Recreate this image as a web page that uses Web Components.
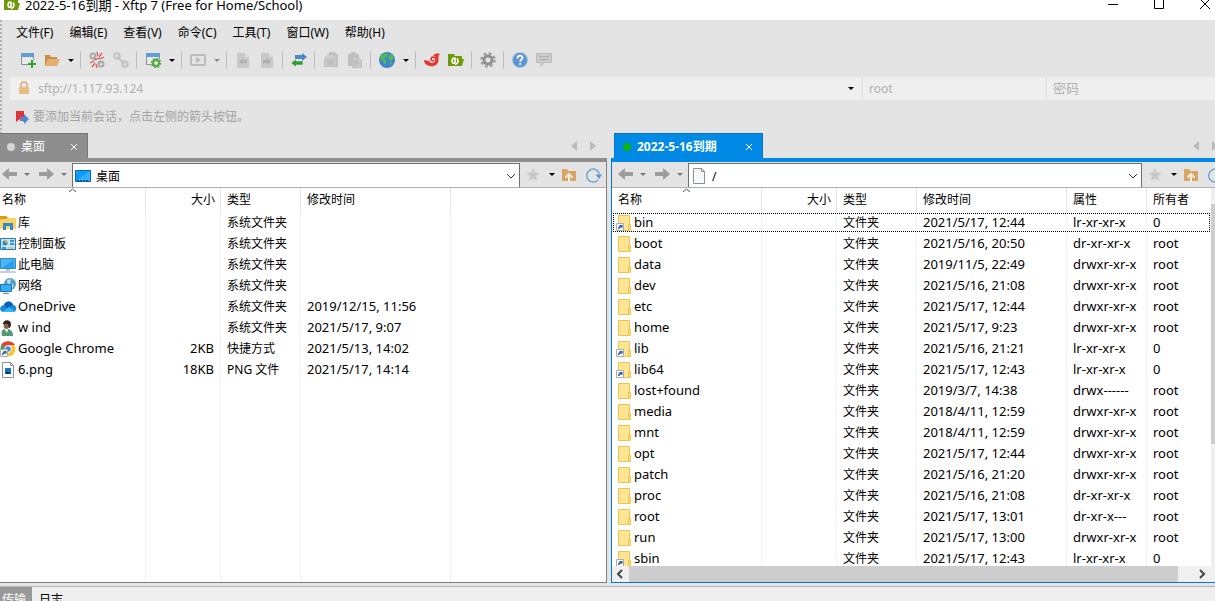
<!DOCTYPE html>
<html lang="zh-CN">
<head>
<meta charset="utf-8">
<title>2022-5-16到期 - Xftp 7 (Free for Home/School)</title>
<style>
html, body { margin: 0; height: 100%; overflow: hidden; }
body { font: 12px/16px "Noto Sans", "Noto Sans CJK SC", sans-serif; color: #000; background: #e4e4e4; }
</style>
</head>
<body>
<xftp-app></xftp-app>
<script>
const folder = '<path d="M2.5.5h11v15h-11z" fill="#ffe593" stroke="#eac54f"/><path d="M12.500 9.500h2v6h-2z" fill="#ffe07a" stroke="#eac54f"/>';
const shortcut = '<path d="M.5 8.500h7v7h-7z" fill="#fff" stroke="#a9adb3"/><path d="M2 14c0-2 1-3 2-3l-1-1h3.500v3.500l-1-1c-1 0-2 0-2 1.500z" fill="#2c5aa0"/>';
const docShape = '<path d="M2 1h8l4 4v11H2z" fill="#c9c9c9"/><path d="M10 1v4h4z" fill="#dedede"/>';
const ICONS = {
  appLogo: '<path d="M0 2h6l1 2h7v10H0z" fill="#6f9a0c"/><path d="M14 7h2l-2 7h-1z" fill="#6f9a0c"/><path d="M6 5.800C3.600 6.500 3.600 10 5 11.500M7 5.500v5.500M7 12.500C10.500 12 10.500 8 9 6.500M5 11.500l2-.5" fill="none" stroke="#fff" stroke-width="1.700"/>',
  newWin: '<path d="M1.500 2.500h12v10h-12z" fill="#eaeaea" stroke="#8d8d8d"/><path d="M1 1h13v4H1z" fill="#5b9fd6"/><path d="M8 12h8M12 8v8" stroke="#e4e4e4" stroke-width="4"/><path d="M8 12h8M12 8v8" stroke="#2aa42a" stroke-width="2"/>',
  open: '<path d="M1 3h5l1 2h6v9H1z" fill="#c98f45"/><path d="M4 7h12l-3 7H1z" fill="#e2b172"/>',
  unlink: '<g fill="none" stroke="#a9a9a9" stroke-width="2"><circle cx="4" cy="4" r="2.500"/><circle cx="12" cy="12" r="2.500"/><path d="M5 5l2 2M9.500 9.500l2 2"/></g><path d="M8 0l1 4M13 1l-3 4M15 5l-4 2M1 11l4-2M3 15l3-4M8 16l-1-4M5 8l6-2" stroke="#e45454" stroke-width="1.300"/>',
  link: '<g fill="none" stroke="#c3c3c3" stroke-width="2"><circle cx="4" cy="4" r="2.800"/><circle cx="12" cy="12" r="2.800"/><path d="M4 5l8 7"/></g>',
  winGear: '<path d="M1.500 2.500h13v10h-13z" fill="#eaeaea" stroke="#8d8d8d"/><path d="M1 1h14v4H1z" fill="#5b9fd6"/><circle cx="11" cy="11" r="5" fill="#e4e4e4"/><circle cx="11" cy="11" r="3" fill="none" stroke="#4fa83f" stroke-width="2"/><circle cx="11" cy="11" r="4.500" fill="none" stroke="#4fa83f" stroke-width="1.600" stroke-dasharray="1.800 1.700"/>',
  play: '<rect x="1" y="3" width="14" height="10" rx="1" fill="none" stroke="#bcbcbc" stroke-width="2"/><path d="M6 5l5 3-5 3z" fill="#bcbcbc"/>',
  docLeft: docShape + '<path d="M4 9.500l4-3.500v2h4v3H8v2z" fill="#b0b0b0"/>',
  docRight: docShape + '<path d="M12 9.500L8 6v2H4v3h4v2z" fill="#b0b0b0"/>',
  swap: '<path d="M4 3h7V1l5 4-5 4V7H4z" fill="#4b86c9"/><path d="M12 9H5V7l-5 4 5 4v-2h7z" fill="#2ea02e" stroke="#e4e4e4" stroke-width=".5"/>',
  copy: '<path d="M6 0h6l3 3v12H6z" fill="#c2c2c2"/><path d="M5 2.500h5l3 3v9H1.500v-8z" fill="#cdcdcd" stroke="#bdbdbd"/><path d="M4 8h7M4 10h7M4 12h7" stroke="#b2b2b2"/>',
  paste: '<path d="M1 2h3V0h5v2h3v12H1z" fill="#bfbfbf"/><path d="M5.500 5.500h6l3 3v7h-9z" fill="#cdcdcd" stroke="#bdbdbd"/><path d="M7 9h5M7 11h5M7 13h5" stroke="#b2b2b2"/>',
  globe: '<circle cx="8" cy="8" r="8" fill="#3f83cc"/><path d="M1 5l4-4 4 1-1 3-3 1 3 3-2 4-2-4-3-2zM10 3l3-1 2 4-3 3-3-3zM11 10l3 0-3 4z" fill="#4fb956"/>',
  shell: '<path d="M3 10c3 4 9 2 9-2 0-3-4-4-5-1.500C6.500 9 9 9.500 9.500 8" fill="none" stroke="#e8342e" stroke-width="1.700"/><path d="M0 8l5 1c2 3 5 3 7 0 1-2 0-5-3-5.500 2-2 4-2.500 7-1.500-2 1-1.500 3-1.500 6 0 5-5 7-9 6-4-1-5.500-4-5.500-6z" fill="#e8342e"/>',
  gear: '<circle cx="8" cy="8" r="4" fill="none" stroke="#909090" stroke-width="3"/><circle cx="8" cy="8" r="6.500" fill="none" stroke="#999" stroke-width="2.500" stroke-dasharray="2.600 2.500"/>',
  help: '<circle cx="8" cy="8" r="8" fill="#a8bfda"/><circle cx="8" cy="8" r="7" fill="#5e94cf"/><path d="M5.500 6.500c0-4 5-3.500 5-.8 0 1.800-2.300 1.500-2.300 4M8.200 11v2" fill="none" stroke="#fff" stroke-width="1.800"/>',
  chat: '<path d="M.5 1.500h15v9H8l-3 4v-4H.5z" fill="#cbcbcb" stroke="#bcbcbc"/><path d="M3 4.500h10M3 7.500h10" stroke="#b0b0b0"/>',
  lock: '<path d="M5 7V4a3 3 0 0 1 6 0v3" fill="none" stroke="#dfb98c" stroke-width="2"/><rect x="3" y="6" width="10" height="7" rx="1" fill="#e9bd82"/>',
  flag: '<path d="M0 2h8v11l-4-3-4 3z" fill="#e0323c"/><path d="M4 8h4V5l5 5-5 5v-3H4z" fill="#4c89cb"/>',
  back: '<path d="M0 7l7-6v4h8v4H7v4z" fill="#9c9c9c"/>',
  fwd: '<path d="M15 7L8 1v4H0v4h8v4z" fill="#9c9c9c"/>',
  desk: '<path d="M.5 2.500h15v11H.5z" fill="#0d9cfb" stroke="#0967ad"/><path d="M1 13L15 3v10z" fill="#35b0ff"/><path d="M2 12.500h12" stroke="#0a4f86" stroke-dasharray="2 1"/>',
  page: '<path d="M2.500.5h8l3 3v12h-11z" fill="#f7f9fa" stroke="#8b9196"/><path d="M10.500.5v3h3" fill="none" stroke="#8b9196"/>',
  star: '<path d="M7 1l2 4.500 5 .5-4 3 1.500 5L7 11.500 2.500 14 4 9 0 6l5-.5z" fill="#c9c9c9"/>',
  up: '<path d="M1 2h5l1 2h8v10H1z" fill="#d9a566"/><path d="M8 15V8M4.500 10.500L8 7l3.500 3.500" fill="none" stroke="#f6ebdd" stroke-width="2"/>',
  refresh: '<path d="M12 13a6.500 6.500 0 1 1 1.500-6" fill="none" stroke="#6fa6d8" stroke-width="1.500"/><path d="M9.500 7.500H16L13 12z" fill="#5b97d0"/>',
  folder, folderLink: folder + shortcut,
  lib: '<path d="M0 1h6l2 2h8v11H0z" fill="#fcd465"/><path d="M0 1h6l2 2-2 1H0z" fill="#d99a11"/><path d="M3 15V8h10v7h-3v-4H6v4z" fill="#318ad1"/>',
  panel: '<path d="M.5 2.500h15v11H.5z" fill="#bfe8fb" stroke="#2a79b4"/><circle cx="5" cy="7" r="2.500" fill="#2188d8"/><path d="M5 7V4a3 3 0 0 1 3 3z" fill="#f29b28"/><path d="M10 5h4M10 8h4M2 12h4" stroke="#1b71b8" stroke-width="1.500"/><path d="M8 12h5" stroke="#f29b28"/>',
  pc: '<path d="M.5 1.500h15v10H.5z" fill="#4cb7f8" stroke="#3687bb"/><path d="M2 11L14 2v9z" fill="#28a0ee"/><path d="M6 12h4v2H6z" fill="#b9c5d0"/><path d="M0 15h16" stroke="#8fa0b0"/>',
  net: '<circle cx="10" cy="6" r="6" fill="#5c9dc5"/><path d="M7 2l4-1-1 4 4 2-2 4-4-3z" fill="#b9dfef"/><path d="M.5 6.500h11v7H.5z" fill="#33aef6" stroke="#2474ac"/><path d="M3 15.500h6M6 14v1" stroke="#7891a5"/>',
  cloud: '<path d="M4 6c2-5 8-4 9 0 4 0 4 6 1 7H3c-4-1-4-6 1-7z" fill="#1687dc"/><path d="M4 6c2-5 8-4 9 0l-6 3z" fill="#0a5fb4"/><path d="M2 13l7-5 6 4-1 1z" fill="#35b2f2"/>',
  user: '<path d="M2 16c-1-4 0-7 3-7h3c4 1 5 4 5 7z" fill="#4f9a74"/><path d="M4 8l3 5 1-4z" fill="#fff"/><ellipse cx="6.500" cy="5" rx="3" ry="4" fill="#8a6248"/><path d="M3 4c0-5 8-5 8 0 0 2-1 4-2 4L8 4z" fill="#33241c"/>',
  chrome: '<circle cx="8" cy="8" r="7.500" fill="#f9c62c"/><path d="M8 8L1 4C4-1 12-1 15 4H8z" fill="#dc4437"/><path d="M8 8l-1 7.500C1 15-1 9 1.500 4z" fill="#2fa158"/><circle cx="8" cy="8" r="3.700" fill="#fff"/><circle cx="8" cy="8" r="2.800" fill="#4387ea"/>' + shortcut,
  png: '<path d="M2.500.5h8l3 3v12h-11z" fill="#fff" stroke="#8b9196"/><path d="M10.500.5v3h3" fill="none" stroke="#8b9196"/><path d="M5 6h6v6H5z" fill="#1976c4"/><path d="M5 12l2-3 2 2 1-1 1 2z" fill="#0b365f"/>'
};

function define(name, render) {
  customElements.define(name, class extends HTMLElement {
    connectedCallback() {
      if (!this.shadowRoot) this.attachShadow({ mode: 'open' }).innerHTML = render(this);
    }
  });
}
const BTN = 'button{all:unset;display:block;flex:none}';

define('ui-icon', el => `<style>:host{display:block;width:16px;height:16px;flex:none}svg{display:block;overflow:visible}</style>
<svg width="16" height="16" viewBox="0 0 16 16" aria-hidden="true">${ICONS[el.getAttribute('name')]}</svg>`);

define('ui-caret', () => `<style>:host{display:block;width:5px;flex:none}
${BTN} button{border:3px solid transparent;border-top-color:currentColor;border-bottom:0;width:0;height:0}</style><button aria-label="更多"></button>`);

define('title-bar', () => `<style>
:host{display:flex;align-items:flex-start;height:20px;background:#fff;padding:0 2px 0 4px;gap:5px;font-size:13px;line-height:10px}
h1{font:inherit;margin:0;flex:1}
ui-icon{margin-top:-4px}
nav{display:flex;gap:30px;margin-top:-4px}
${BTN} svg{display:block}
</style><ui-icon name="appLogo"></ui-icon><h1>2022-5-16到期 - Xftp 7 (Free for Home/School)</h1>
<nav aria-label="窗口">
<button aria-label="最小化"><svg width="16" height="16"><path d="M3 8.500h10" stroke="#000"/></svg></button>
<button aria-label="最大化"><svg width="16" height="16"><path d="M3.500 3.500h9v9h-9z" fill="none" stroke="#000"/></svg></button>
<button aria-label="关闭"><svg width="16" height="16"><path d="M3 3l10 10M13 3L3 13" stroke="#000"/></svg></button></nav>`);

define('menu-bar', () => `<style>
:host{display:flex;gap:16px;height:26px;align-items:center;padding-left:16px}
${BTN}</style>${['文件(F)', '编辑(E)', '查看(V)', '命令(C)', '工具(T)', '窗口(W)', '帮助(H)'].map(t => `<button>${t}</button>`).join('')}`);

define('tool-bar', () => {
  const items = 'newWin open v | unlink link | winGear v | play g | docLeft docRight | swap | copy paste | globe v | shell appLogo | gear | help chat'.split(' ');
  return `<style>
:host{display:flex;gap:8px;height:28px;align-items:center;padding-left:20px}
${BTN} i{width:1px;height:18px;margin-left:-1px;background:#bdbdbd}
.g{color:#8a8a8a}</style>` + items.map(n => n === '|' ? '<i></i>' : n === 'v' ? '<ui-caret></ui-caret>' : n === 'g' ? '<ui-caret class="g"></ui-caret>' : `<button aria-label="${n}"><ui-icon name="${n}"></ui-icon></button>`).join('');
});

define('address-bar', () => `<style>
:host{display:grid;grid-template-columns:1fr 182px 168px;gap:2px;margin:3px 0 0 10px}
label{display:flex;align-items:center;gap:6px;height:23px;background:#efefef;padding:0 8px 0 6px;box-sizing:border-box;min-width:0}
input{all:unset;flex:1;min-width:0;color:#b0b0b0;line-height:16px}
input::placeholder{color:#b0b0b0;opacity:1;font-size:13px}
</style>
<label><ui-icon name="lock"></ui-icon><input aria-label="主机" value="sftp://1.117.93.124"><ui-caret></ui-caret></label>
<label><input aria-label="用户名" value="root"></label>
<label><input type="password" aria-label="密码" placeholder="密码"></label>`);

define('bookmark-bar', () => `<style>
:host{display:flex;align-items:center;gap:1px;height:33px;padding-left:16px;color:#a2a2a2}${BTN}
</style><button aria-label="添加会话"><ui-icon name="flag"></ui-icon></button><span>要添加当前会话，点击左侧的箭头按钮。</span>`);

define('pane-tabs', el => {
  const remote = el.hasAttribute('remote');
  return `<style>
:host{display:flex;height:25px;padding-left:${remote ? 3 : 0}px}
.tab{display:flex;align-items:center;box-sizing:border-box;width:${remote ? 149 : 88}px;background:${remote ? '#008ae6' : '#8e8e8e'};border:1px solid ${remote ? '#0078d0' : '#777'};border-bottom:0;${remote ? '' : 'border-left:0;'}color:#fff;padding:2px 9px 0 ${remote ? 8 : 7}px;gap:6px;${remote ? 'font-weight:700;' : ''}}
.dot{width:8px;height:8px;border-radius:50%;background:${remote ? '#0ab50a' : '#d5d5d5'}}
span{flex:1}
.scroll{margin-left:auto;display:flex;align-items:center;gap:13px;padding-right:11px}
${BTN} svg{display:block}
</style><div class="tab"><i class="dot"></i><span>${remote ? '2022-5-16到期' : '桌面'}</span><button aria-label="关闭标签"><svg width="8" height="8"><path d="M1 1l6 6M7 1L1 7" stroke="#fff"/></svg></button></div>
<div class="scroll"><button aria-label="向左"><svg width="6" height="10"><path d="M6 0v10L0 5z" fill="#bbb"/></svg></button><button aria-label="向右"><svg width="6" height="10"><path d="M0 0v10l6-5z" fill="#bbb"/></svg></button></div>`;
});

define('path-bar', el => `<style>
:host{display:flex;align-items:center;height:26px;box-sizing:border-box;border-bottom:1px solid #b0b0b0;background:#e4e4e4;padding:0 4px 0 ${el.getAttribute('icon') === 'page' ? 6 : 2}px;gap:6px}
${BTN} .g{color:#777}
.first{margin-right:4px}
label{flex:1;display:flex;align-items:center;gap:5px;align-self:stretch;margin-top:1px;background:#fff;border:1px solid #707070;border-bottom:0;padding:0 3px 0 2px;min-width:0}
input{all:unset;flex:1;min-width:0;padding-top:2px}
.end{display:flex;align-items:center;gap:7px}
.end .refresh{margin-left:2px}
svg{display:block}
</style>
<button aria-label="后退"><ui-icon name="back"></ui-icon></button><ui-caret class="g first"></ui-caret>
<button aria-label="前进"><ui-icon name="fwd"></ui-icon></button><ui-caret class="g"></ui-caret>
<label><ui-icon name="${el.getAttribute('icon')}"></ui-icon><input aria-label="路径" value="${el.getAttribute('path')}"><button aria-label="展开"><svg width="10" height="8"><path d="M1 2l4 4 4-4" fill="none" stroke="#333"/></svg></button></label>
<div class="end"><button aria-label="收藏"><ui-icon name="star"></ui-icon></button><ui-caret></ui-caret>
<button aria-label="上级"><ui-icon name="up"></ui-icon></button><button class="refresh" aria-label="刷新"><ui-icon name="refresh"></ui-icon></button></div>`);

const LOCAL = [
  ['lib', '库', '', '系统文件夹', ''], ['panel', '控制面板', '', '系统文件夹', ''],
  ['pc', '此电脑', '', '系统文件夹', ''], ['net', '网络', '', '系统文件夹', ''],
  ['cloud', 'OneDrive', '', '系统文件夹', '2019/12/15, 11:56'], ['user', 'w ind', '', '系统文件夹', '2021/5/17, 9:07'],
  ['chrome', 'Google Chrome', '2KB', '快捷方式', '2021/5/13, 14:02'], ['png', '6.png', '18KB', 'PNG 文件', '2021/5/17, 14:14']
];
const REMOTE = `bin|2021/5/17, 12:44|lr-xr-xr-x|0
boot|2021/5/16, 20:50|dr-xr-xr-x|root
data|2019/11/5, 22:49|drwxr-xr-x|root
dev|2021/5/16, 21:08|drwxr-xr-x|root
etc|2021/5/17, 12:44|drwxr-xr-x|root
home|2021/5/17, 9:23|drwxr-xr-x|root
lib|2021/5/16, 21:21|lr-xr-xr-x|0
lib64|2021/5/17, 12:43|lr-xr-xr-x|0
lost+found|2019/3/7, 14:38|drwx------|root
media|2018/4/11, 12:59|drwxr-xr-x|root
mnt|2018/4/11, 12:59|drwxr-xr-x|root
opt|2021/5/17, 12:44|drwxr-xr-x|root
patch|2021/5/16, 21:20|drwxr-xr-x|root
proc|2021/5/16, 21:08|dr-xr-xr-x|root
root|2021/5/17, 13:01|dr-xr-x---|root
run|2021/5/17, 13:00|drwxr-xr-x|root
sbin|2021/5/17, 12:43|lr-xr-xr-x|0`.split('\n').map(l => {
  const [n, t, a, o] = l.split('|');
  return [a[0] === 'l' ? 'folderLink' : 'folder', n, '', '文件夹', t, a, o];
});

define('file-list', el => {
  const remote = el.hasAttribute('remote');
  const heads = remote ? ['名称', '大小', '类型', '修改时间', '属性', '所有者'] : ['名称', '大小', '类型', '修改时间', ''];
  const widths = remote ? [150, 75, 80, 150, 80, 0] : [146, 75, 80, 150, 0];
  const rows = remote ? REMOTE : LOCAL;
  return `<style>
:host{display:block;overflow:hidden;min-height:0;min-width:0;background:#fff}
table{width:100%;height:100%;table-layout:fixed;border-collapse:separate;border-spacing:0}
th{position:relative;height:24px;padding:0 6px;font-weight:400;text-align:left;border-right:1px solid #e5e5e5;box-sizing:border-box}
th:first-of-type{padding-left:${remote ? 6 : 2}px}
th svg{position:absolute;top:0;left:50%;margin-left:-5px}
td{height:21px;padding:0 6px 2px;border-right:1px solid #eef3fa;box-sizing:border-box;white-space:nowrap;font-size:13px}
td:nth-child(3){font-size:12px;padding-bottom:0}
td:first-child{padding:0 0 0 ${remote ? 4 : 0}px}
th:last-child,td:last-child{border-right:0}
th:nth-child(2),td:nth-child(2){text-align:right}
th:nth-child(2){padding-right:5px}
.name{display:flex;align-items:center;gap:2px;height:21px}
.name span{padding-bottom:2px}
.name .cjk{font-size:12px;padding-bottom:0}
.focus{outline:1px dotted #000;outline-offset:-2px}
.fill td{height:auto}
</style><table><colgroup>${widths.map(w => w ? `<col style="width:${w}px">` : '<col>').join('')}</colgroup>
<thead><tr>${heads.map((h, i) => `<th>${h}${i ? '' : '<svg width="9" height="5"><path d="M1 4l3.500-3L8 4" fill="none" stroke="#555"/></svg>'}</th>`).join('')}</tr></thead>
<tbody>${rows.map((r, i) => `<tr${remote && !i ? ' class="focus"' : ''}><td><div class="name"><ui-icon name="${r[0]}"></ui-icon><span${/^[a-zA-Z0-9]/.test(r[1]) ? '' : ' class="cjk"'}>${r[1]}</span></div></td>${r.slice(2).map(c => `<td>${c}</td>`).join('')}${remote ? '' : '<td></td>'}</tr>`).join('')}
<tr class="fill">${heads.map(() => '<td></td>').join('')}</tr></tbody></table>`;
});

define('file-pane', el => {
  const remote = el.hasAttribute('remote');
  const r = remote ? ' remote' : '';
  return `<style>
:host{display:flex;flex-direction:column;min-width:0;min-height:0}
.frame{flex:1;min-height:0;display:flex;flex-direction:column;border:1px solid ${remote ? '#0078d7' : '#808080'};border-top:4px solid ${remote ? '#008ae6' : '#8e8e8e'};${remote ? '' : 'border-left:0;'}}
.body{flex:1;min-height:0;display:grid;grid-template-columns:minmax(0,1fr)${remote ? ' 17px' : ''};grid-template-rows:minmax(0,1fr)${remote ? ' 16px' : ''};background:#f0f0f0}
.v{padding-top:16px}.v i{display:block;height:240px;background:#cdcdcd}
.h{display:flex}.h i{flex:1;background:#cdcdcd;margin-right:16px}
svg{display:block}
</style><pane-tabs${r}></pane-tabs><div class="frame">
<path-bar icon="${remote ? 'page' : 'desk'}" path="${remote ? '/' : '桌面'}"></path-bar>
<div class="body"><file-list${r}></file-list>${remote ? `<div class="v"><i></i></div>
<div class="h"><svg width="17" height="16"><path d="M10 4L6 8l4 4" fill="none" stroke="#444" stroke-width="2"/></svg><i></i><svg width="17" height="16"><path d="M6 4l4 4-4 4" fill="none" stroke="#444" stroke-width="2"/></svg></div>` : ''}</div></div>`;
});

define('bottom-tabs', () => `<style>
:host{display:flex;height:14px;overflow:hidden;margin-top:3px;border-top:1px solid #b5b5b5;background:#efefef}
${BTN} button{height:26px;padding:0 6px 0 7px;line-height:26px}
button.on{padding:0 6px 0 2px;background:#999;color:#fff}
</style><button class="on">传输</button><button>日志</button>`);

define('xftp-app', () => `<style>
:host{display:flex;flex-direction:column;height:100vh;overflow:hidden;background:#e4e4e4}
header{background:repeating-linear-gradient(#b2b2b2 0 2px,#e4e4e4 2px 4px) 0 0/2px 100% no-repeat}
main{flex:1;min-height:0;display:grid;grid-template-columns:607fr 618fr;grid-template-rows:minmax(0,1fr);column-gap:4px;margin-right:-14px}
</style><title-bar></title-bar>
<header><menu-bar></menu-bar><tool-bar></tool-bar><address-bar></address-bar><bookmark-bar></bookmark-bar></header>
<main><file-pane></file-pane><file-pane remote></file-pane></main>
<bottom-tabs></bottom-tabs>`);
</script>
</body>
</html>
